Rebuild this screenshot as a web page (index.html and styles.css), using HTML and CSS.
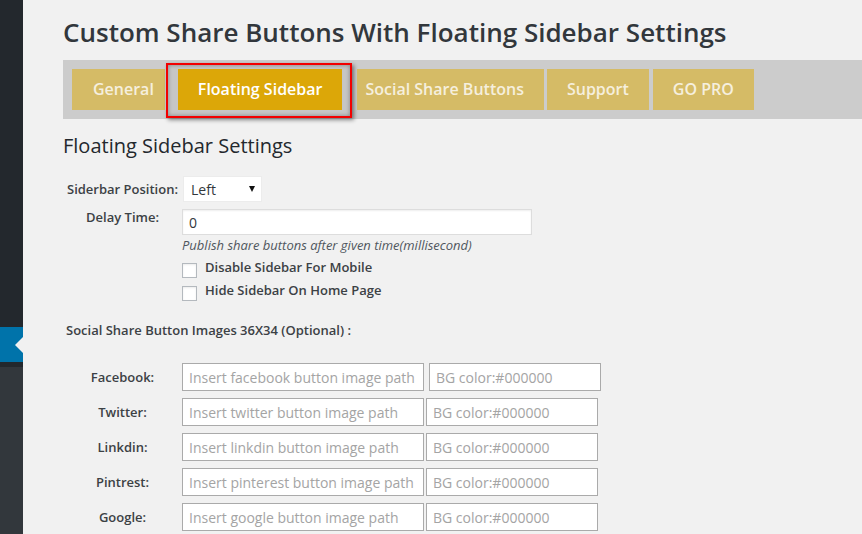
FILE: index.html
```html
<!DOCTYPE html>
<html>
<head>
<meta charset="utf-8">
<title>Custom Share Buttons With Floating Sidebar Settings</title>
<link rel="stylesheet" href="styles.css">
</head>
<body>
<div class="page">
  <aside class="sidebar">
    <div class="sb-top"></div>
    <div class="sb-current"><span class="sb-arrow"></span></div>
    <div class="sb-gap"></div>
    <div class="sb-rest"></div>
  </aside>
  <main class="main">
    <h1 class="title">Custom Share Buttons With Floating Sidebar Settings</h1>
    <nav class="tabs">
      <a class="tab tab-general">General</a>
      <div class="highlight"><a class="tab tab-active">Floating Sidebar</a></div>
      <a class="tab tab-social">Social Share Buttons</a>
      <a class="tab tab-support">Support</a>
      <a class="tab">GO PRO</a>
    </nav>
    <h2 class="section-title">Floating Sidebar Settings</h2>
    <div class="form-grid">
      <div class="label label-mid">Siderbar Position:</div>
      <div class="field">
        <div class="select"><span>Left</span><span class="caret"></span></div>
      </div>
      <div class="label">Delay Time:</div>
      <div class="field">
        <input class="delay" type="text" value="0">
        <p class="hint">Publish share buttons after given time(millisecond)</p>
        <label class="check"><input class="box" type="checkbox"><span>Disable Sidebar For Mobile</span></label>
        <label class="check check-2"><input class="box" type="checkbox"><span>Hide Sidebar On Home Page</span></label>
      </div>
    </div>
    <h3 class="sub-title">Social Share Button Images 36X34 (Optional) :</h3>
    <div class="img-rows">
      <div class="img-row">
        <div class="row-label">Facebook:</div>
        <input class="path" type="text" placeholder="Insert facebook button image path">
        <input class="color color-first" type="text" placeholder="BG color:#000000">
      </div>
      <div class="img-row">
        <div class="row-label">Twitter:</div>
        <input class="path" type="text" placeholder="Insert twitter button image path">
        <input class="color" type="text" placeholder="BG color:#000000">
      </div>
      <div class="img-row">
        <div class="row-label">Linkdin:</div>
        <input class="path" type="text" placeholder="Insert linkdin button image path">
        <input class="color" type="text" placeholder="BG color:#000000">
      </div>
      <div class="img-row">
        <div class="row-label">Pintrest:</div>
        <input class="path" type="text" placeholder="Insert pinterest button image path">
        <input class="color" type="text" placeholder="BG color:#000000">
      </div>
      <div class="img-row">
        <div class="row-label">Google:</div>
        <input class="path" type="text" placeholder="Insert google button image path">
        <input class="color" type="text" placeholder="BG color:#000000">
      </div>
    </div>
  </main>
</div>
</body>
</html>
```

FILE: styles.css
```css
* { box-sizing: border-box; }
html, body {
  margin: 0;
  padding: 0;
  background: #f1f1f1;
  font-family: "Open Sans", "DejaVu Sans", sans-serif;
  color: #23282d;
}
.page {
  display: flex;
  width: 862px;
  height: 534px;
  overflow: hidden;
}
.sidebar {
  width: 23px;
  flex: none;
  display: flex;
  flex-direction: column;
}
.sb-top { height: 327px; background: #23282d; }
.sb-current {
  height: 35px;
  background: #0073aa;
  display: flex;
  justify-content: flex-end;
  align-items: center;
}
.sb-arrow {
  width: 0;
  height: 0;
  border-top: 8px solid transparent;
  border-bottom: 8px solid transparent;
  border-right: 8px solid #f1f1f1;
}
.sb-gap { height: 5px; background: #23282d; }
.sb-rest { flex: 1; background: #32373c; }

.main {
  flex: 1;
  padding-left: 40px;
}
.title {
  margin: 0;
  padding-top: 14px;
  font-size: 26px;
  line-height: 36px;
  font-weight: 600;
  color: #32373c;
  white-space: nowrap;
}
.tabs {
  margin-top: 10px;
  background: #cccccc;
  display: flex;
  align-items: flex-start;
  padding: 9px 0 9px 9px;
}
.tab {
  display: block;
  height: 41px;
  line-height: 41px;
  padding: 0 20px;
  margin-left: 4px;
  background: #d5bb66;
  color: #f5efde;
  font-size: 16px;
  font-weight: 600;
  white-space: nowrap;
}
.tab-general { margin-left: 0; padding-left: 21px; padding-right: 11px; }
.highlight {
  margin: -6px 0 -8px 1px;
  border: 2px solid #f20000;
  padding: 4px 8px 6px 10px;
  background: #c6c6c6;
  box-shadow: 2px 2px 4px rgba(0, 0, 0, 0.45), inset 0 0 4px rgba(0, 0, 0, 0.35);
}
.tab-active {
  margin-left: 0;
  padding: 0 20px;
  background: #dca708;
  color: #ffffff;
}
.tab-social { margin-left: 5px; padding-left: 8px; padding-right: 20px; }
.tab-support { margin-left: 3px; }

.section-title {
  margin: 13px 0 0;
  font-size: 20px;
  line-height: 27px;
  font-weight: 400;
  color: #23282d;
}
.form-grid {
  margin-top: 17px;
  display: grid;
  grid-template-columns: 119px auto;
  row-gap: 7px;
}
.label, .row-label {
  font-size: 13px;
  line-height: 17px;
  font-weight: 600;
  color: #3c4145;
  text-align: center;
}
.label-mid { align-self: center; }
.field { display: flex; flex-direction: column; align-items: flex-start; }
.select {
  width: 79px;
  height: 26px;
  margin-left: 1px;
  background: #fff;
  border: 1px solid #ececec;
  display: flex;
  align-items: center;
  justify-content: space-between;
  padding: 0 6px 0 7px;
  font-size: 14px;
  color: #32373c;
}
.caret {
  width: 0;
  height: 0;
  border-left: 3.5px solid transparent;
  border-right: 3.5px solid transparent;
  border-top: 6px solid #111;
}
.delay {
  width: 350px;
  height: 26px;
  margin: 0;
  border: 1px solid #dddddd;
  box-shadow: inset 0 1px 2px rgba(0, 0, 0, 0.07);
  background: #fff;
  padding: 0 6px;
  font-family: "Open Sans", "DejaVu Sans", sans-serif;
  font-size: 14px;
  color: #32373c;
  outline: none;
}
.hint {
  margin: 1px 0 0;
  font-size: 13px;
  line-height: 18px;
  font-style: italic;
  color: #50575e;
}
.check {
  display: flex;
  align-items: flex-start;
  margin-top: 5px;
  font-size: 13px;
  line-height: 17px;
  font-weight: 600;
  color: #3c4145;
}
.check-2 { margin-top: 4px; }
.box {
  -webkit-appearance: none;
  appearance: none;
  width: 15px;
  height: 15px;
  margin: 4px 8px 0 0;
  border: 1px solid #b4b9be;
  background: #fff;
  border-radius: 0;
  box-shadow: inset 0 1px 2px rgba(0, 0, 0, 0.08);
}
.sub-title {
  margin: 21px 0 0 3px;
  font-size: 13px;
  line-height: 17px;
  font-weight: 600;
  color: #3c4145;
}
.img-rows {
  margin-top: 24px;
  display: flex;
  flex-direction: column;
  gap: 7px;
}
.img-row {
  display: flex;
  align-items: center;
}
.row-label { width: 119px; flex: none; }
.path, .color {
  height: 28px;
  margin: 0;
  border: 1px solid #aaaaaa;
  background: #fff;
  padding: 0 6px;
  font-family: "Open Sans", "DejaVu Sans", sans-serif;
  font-size: 14px;
  color: #32373c;
  outline: none;
}
.path { width: 242px; }
.color { width: 172px; margin-left: 2px; }
.color-first { margin-left: 5px; }
::placeholder { color: #a4a4a4; opacity: 1; }
```
